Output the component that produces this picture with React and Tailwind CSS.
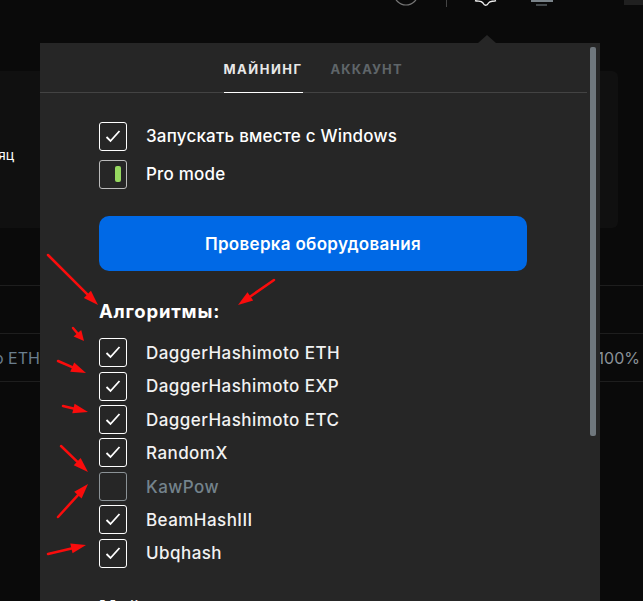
import React from "react";

const algorithms = [
  { name: "DaggerHashimoto ETH", checked: true },
  { name: "DaggerHashimoto EXP", checked: true },
  { name: "DaggerHashimoto ETC", checked: true },
  { name: "RandomX", checked: true },
  { name: "KawPow", checked: false },
  { name: "BeamHashIII", checked: true },
  { name: "Ubqhash", checked: true },
];

// tail x, tail y, tip x, tip y
const arrows = [
  [48, 255, 98, 305],
  [274, 280, 238, 305],
  [73, 328, 84, 341],
  [58, 361, 86, 373],
  [63, 406, 88, 412],
  [61, 446, 88, 472],
  [58, 517, 88, 484],
  [48, 554, 86, 545],
];

function Arrow({ from, to }) {
  const [x1, y1] = from;
  const [x2, y2] = to;
  const len = Math.hypot(x2 - x1, y2 - y1);
  const ux = (x2 - x1) / len;
  const uy = (y2 - y1) / len;
  const head = Math.min(15, len * 0.6);
  const bx = x2 - ux * head;
  const by = y2 - uy * head;
  const points = `${x2},${y2} ${bx - uy * 5},${by + ux * 5} ${bx + uy * 5},${by - ux * 5}`;
  return (
    <g>
      <line x1={x1} y1={y1} x2={bx} y2={by} stroke="#fa0c0c" strokeWidth="2.5" strokeLinecap="round" />
      <polygon points={points} fill="#fa0c0c" />
    </g>
  );
}

function Check({ checked, dim }) {
  return (
    <span className={`flex h-[29px] w-[28px] shrink-0 items-center justify-center rounded-[3px] border ${dim ? "border-[#8b9296]" : "border-white"}`}>
      {checked ? (
        <svg width="16" height="13" viewBox="0 0 16 13" fill="none">
          <path d="M1.5 7L5.5 11L14.5 1" stroke="#fff" strokeWidth="1.8" />
        </svg>
      ) : null}
    </span>
  );
}

function Popover() {
  return (
    <div className="absolute left-[40px] top-[43px] h-[558px] w-[560px] overflow-hidden bg-[#262626] text-white">
      <div className="mr-[13px] flex h-[50px] justify-center gap-[28px] border-b border-[#434343] pr-[2px] text-[13px] font-bold">
        <div className="flex h-[50px] w-[79px] items-center justify-center border-b border-white pt-[4px] tracking-[1.5px] text-[#e8e8e8]">МАЙНИНГ</div>
        <div className="flex h-[50px] w-[71px] items-center pt-[4px] tracking-[1.1px] text-[#5f6569]">АККАУНТ</div>
      </div>
      <div className="pl-[59px] pr-[73px] pt-[24px]">
        <div className="flex h-[38px] items-center gap-[19px] text-[17px] font-medium tracking-[0.2px]">
          <Check checked />
          <span className="pt-[2px]">Запускать вместе с Windows</span>
        </div>
        <div className="flex h-[38px] items-center gap-[19px] text-[17px] font-medium tracking-[0.2px]">
          <span className="flex h-[29px] w-[28px] items-center justify-end rounded-[3px] border border-[#bbb] pr-[5px]">
            <span className="h-[16px] w-[6px] rounded-[2px] bg-[#96d860]" />
          </span>
          <span className="pt-[2px]">Pro mode</span>
        </div>
        <button className="mt-[23px] h-[55px] w-[428px] rounded-[10px] bg-[#0069e6] pt-[2px] text-[17px] font-semibold tracking-[0.3px]">Проверка оборудования</button>
        <div className="mb-[13px] mt-[28px] text-[18.5px] font-bold leading-[24px] tracking-[0.8px]">Алгоритмы:</div>
        {algorithms.map((item) => (
          <div
            key={item.name}
            className={`flex h-[33.4px] items-center gap-[19px] text-[17px] font-medium tracking-[0.45px] ${item.checked ? "text-[#f2f2f2]" : "text-[#74838c]"}`}
          >
            <Check checked={item.checked} dim={!item.checked} />
            <span className="pt-[2px]">{item.name}</span>
          </div>
        ))}
        <div className="mt-[25px] text-[18.5px] font-bold leading-[24px] tracking-[0.8px]">Майнер</div>
      </div>
      <div className="absolute left-[550px] top-[4px] h-[389px] w-[6px] rounded-[2px] bg-[#6f777d]" />
    </div>
  );
}

export default function App() {
  return (
    <div className="relative h-[601px] w-[643px] overflow-hidden bg-[#0a0a0a] font-['Inter',sans-serif]">
      {/* top bar, only its lower edge is in view */}
      <div className="flex h-[71px] items-start">
        <svg width="643" height="10" viewBox="0 0 643 10" fill="none">
          <circle cx="406" cy="-7" r="12" stroke="#777" strokeWidth="1.2" />
          <line x1="446.5" y1="0" x2="446.5" y2="7" stroke="#444" />
          <path d="M475 0.5C478 2 481 0 483 3C484.5 6 487 6 488.5 3C490 0.5 493 2 496 0.5" stroke="#eee" strokeWidth="1.4" />
          <rect x="531" y="0" width="22" height="2" fill="#7b848a" />
          <rect x="536" y="4.5" width="11" height="1" fill="#7b848a" />
          <rect x="624" y="0" width="19" height="5" fill="#202020" />
        </svg>
      </div>
      <div className="mr-[25px] flex h-[157px] items-center rounded-r-[6px] bg-[#101010] pt-[10px]">
        <span className="ml-[-2px] text-[14px] text-white">яц</span>
      </div>
      <div className="mt-[57px] border-t border-[#1e1e1e]">
        <div className="h-[47px]" />
        <div className="flex h-[49px] items-center justify-between border-y border-[#1e1e1e] text-[16px] text-[#8a9298]">
          <span className="ml-[-6px] text-[#6a7e8e]">o ETH</span>
          <span className="mr-[3px]">100%</span>
        </div>
      </div>
      <div className="absolute left-[478px] top-[35px] h-0 w-0 border-x-[9px] border-b-[8px] border-x-transparent border-b-[#262626]" />
      <Popover />
      <svg className="pointer-events-none absolute left-0 top-0" width="643" height="601" viewBox="0 0 643 601">
        {arrows.map((a) => (
          <Arrow key={a.join("-")} from={[a[0], a[1]]} to={[a[2], a[3]]} />
        ))}
      </svg>
    </div>
  );
}
